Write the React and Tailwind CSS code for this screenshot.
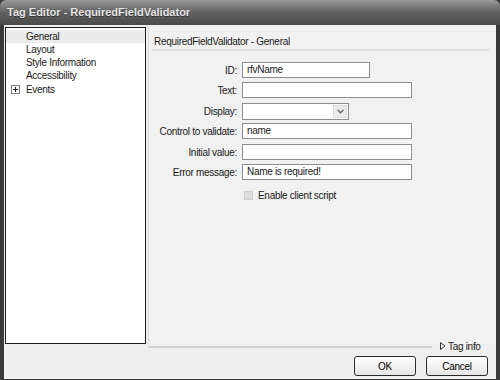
import React from "react";

const labelRows = [
  { label: "ID:", kind: "input", value: "rfvName", w: "w-[128px]", mt: "mt-0" },
  { label: "Text:", kind: "input", value: "", w: "w-[170px]", mt: "mt-[4px]" },
  { label: "Display:", kind: "select", value: "", w: "w-[107px]", mt: "mt-[5px]" },
  { label: "Control to validate:", kind: "input", value: "name", w: "w-[170px]", mt: "mt-[3px]" },
  { label: "Initial value:", kind: "input", value: "", w: "w-[170px]", mt: "mt-[5px]" },
  { label: "Error message:", kind: "input", value: "Name is required!", w: "w-[170px]", mt: "mt-[4px]" },
];

export default function App() {
  return (
    <div className="w-[500px] h-[380px] overflow-hidden bg-[#3a3a3a] flex flex-col tracking-[-0.3px]" style={{ fontFamily: '"Liberation Sans", Arial, sans-serif' }}>
      {/* Title bar */}
      <div className="h-[25px] shrink-0 rounded-t-[6px] bg-gradient-to-b from-[#9a9a9a] via-[#606060] to-[#4a4a4a] flex items-center pl-[7px]">
        <span className="text-[11px] font-bold text-[#e4e4e4] tracking-[0px] [text-shadow:0_1px_0_#333]">Tag Editor - RequiredFieldValidator</span>
      </div>
      {/* Body */}
      <div className="flex-1 mx-[4px] mb-[4px] bg-[#efefef] flex flex-col">
        <div className="flex flex-1 pt-[2px]">
          {/* Left tree */}
          <div className="w-[141px] ml-[1px] h-[317px] bg-white border border-[#1e1e1e] text-[10px] text-[#1a1a1a] flex flex-col pt-[2px]">
            <div className="h-[13px] bg-[#ececec] pl-[20px] leading-[13px]">General</div>
            <div className="h-[13px] pl-[20px] leading-[13px]">Layout</div>
            <div className="h-[13px] pl-[20px] leading-[13px]">Style Information</div>
            <div className="h-[14px] pl-[20px] leading-[14px]">Accessibility</div>
            <div className="h-[13px] flex items-center leading-[13px]">
              <div className="ml-[5px] w-[9px] h-[9px] border border-[#7a7a7a] flex items-center justify-center">
                <svg width="5" height="5" viewBox="0 0 5 5"><path d="M0 2.5H5M2.5 0V5" stroke="#222" strokeWidth="1" /></svg>
              </div>
              <span className="ml-[6px]">Events</span>
            </div>
          </div>
          {/* Right panel */}
          <div className="flex-1 ml-[2px] flex flex-col border-l border-[#d8d8d8] bg-[#f1f1f1]">
            <div className="mt-[7px] mx-[3px] border-b-2 border-[#dcdcdc] text-[10px] leading-[15px] text-[#1a1a1a] w-[337px] pl-[2px]">
              RequiredFieldValidator - General
            </div>
            <div className="mt-[11px] flex flex-col text-[10px] text-[#1a1a1a]">
              {labelRows.map((r) => (
                <div key={r.label} className={`flex items-center ${r.mt}`}>
                  <div className="w-[93px] text-right pr-[5px]">{r.label}</div>
                  {r.kind === "input" ? (
                    <div className={`${r.w} h-[16px] bg-white border border-[#8e8e8e] pl-[4px] leading-[14px]`}>{r.value}</div>
                  ) : (
                    <div className={`${r.w} h-[17px] bg-white border border-[#8e8e8e] flex justify-end items-center pr-[1px]`}>
                      <div className="w-[14px] h-[13px] bg-[#ebebeb] border border-[#dadada] flex items-center justify-center">
                        <svg width="7" height="5" viewBox="0 0 7 5"><path d="M0.5 0.8L3.5 3.8L6.5 0.8" fill="none" stroke="#666" strokeWidth="1.3" /></svg>
                      </div>
                    </div>
                  )}
                </div>
              ))}
              <div className="flex items-center h-[11px] mt-[10px]">
                <div className="w-[95px]" />
                <div className="w-[9px] h-[9px] bg-[#dcdcdc] border border-[#d0d0d0]" />
                <span className="ml-[5px] text-[#1a1a1a]">Enable client script</span>
              </div>
            </div>
          </div>
        </div>
        {/* Footer */}
        <div className="h-[35px] shrink-0 flex flex-col">
          <div className="flex items-center h-[6px]">
            <div className="ml-[144px] w-[284px] h-[2px] bg-[#d4d4d4]" />
            <div className="ml-[8px] flex items-center text-[10px] text-[#1a1a1a] -mt-[2px]">
              <svg width="6" height="8" viewBox="0 0 6 8"><path d="M0.5 0.5L5 4L0.5 7.5Z" fill="none" stroke="#333" strokeWidth="1" /></svg>
              <span className="ml-[2px]">Tag info</span>
            </div>
          </div>
          <div className="flex justify-end gap-[10px] pr-[8px] mt-[6px]">
            <div className="w-[62px] h-[20px] rounded-[3px] border border-[#2a2a2a] bg-gradient-to-b from-white to-[#e6e6e6] text-[10px] flex items-center justify-center">OK</div>
            <div className="w-[62px] h-[20px] rounded-[3px] border border-[#2a2a2a] bg-gradient-to-b from-white to-[#e6e6e6] text-[10px] flex items-center justify-center">Cancel</div>
          </div>
        </div>
      </div>
    </div>
  );
}
